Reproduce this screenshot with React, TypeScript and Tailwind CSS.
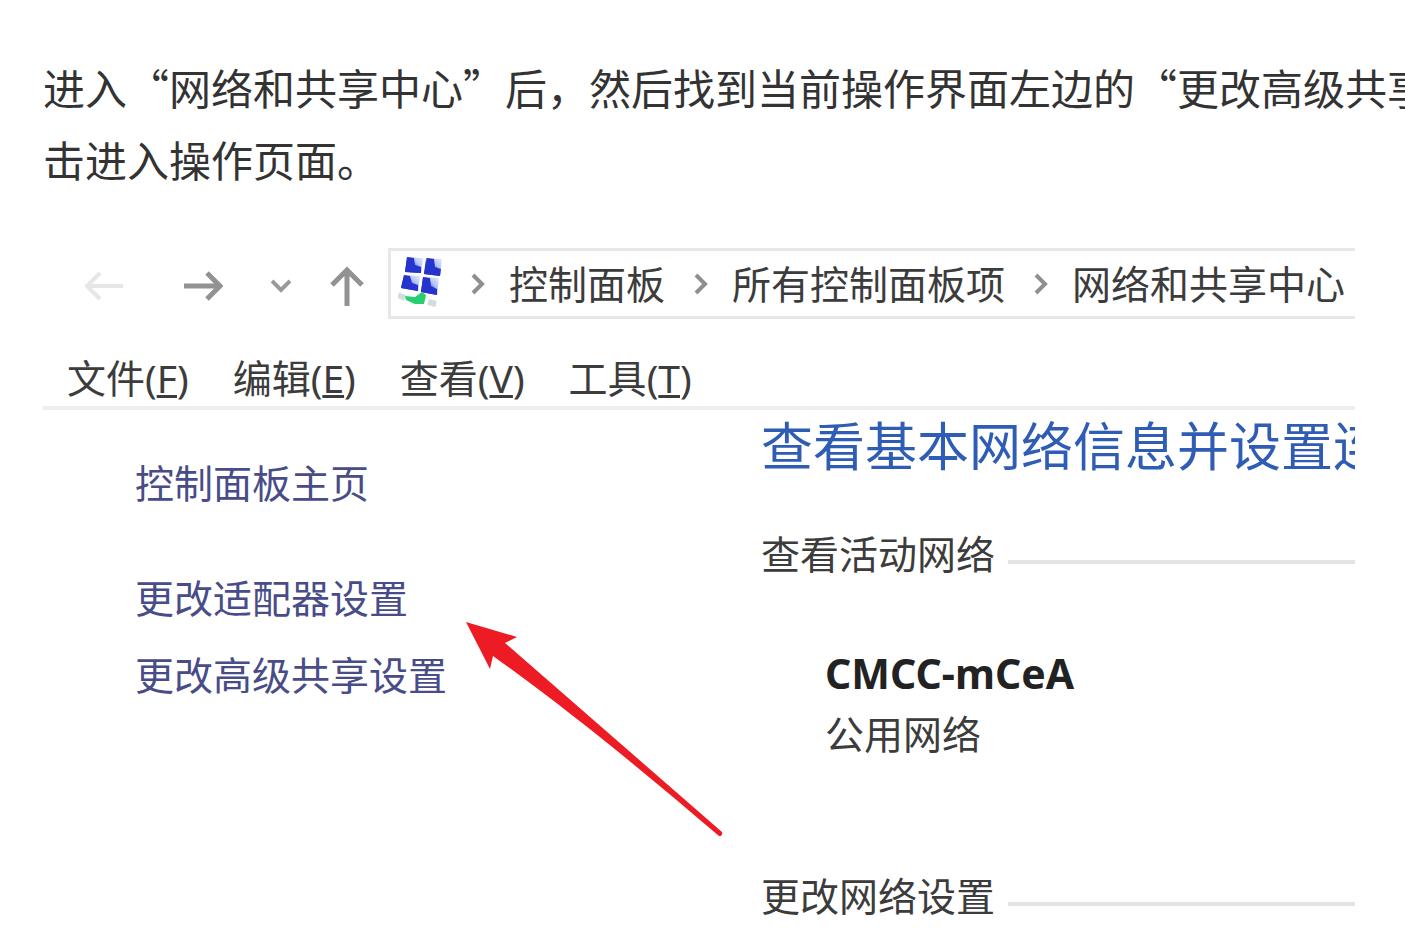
const crumbs = ["控制面板", "所有控制面板项", "网络和共享中心"];

const menus = [
    { label: "文件", accessKey: "F" },
    { label: "编辑", accessKey: "E" },
    { label: "查看", accessKey: "V" },
    { label: "工具", accessKey: "T" },
];

function NetworkIcon() {
    return (
        <svg width="44" height="54" viewBox="0 0 44 54" className="shrink-0" aria-hidden="true">
            <defs>
                <linearGradient id="screen" x1="0" y1="1" x2="1" y2="0">
                    <stop offset="0.35" stopColor="#2232cc" />
                    <stop offset="0.65" stopColor="#b4c4f6" />
                    <stop offset="1" stopColor="#e6eeff" />
                </linearGradient>
            </defs>
            <g transform="translate(0 -2)">
                <path d="M9 2 25 3 23 18 7 17Z" fill="url(#screen)" />
                <path d="M28 3 44 4 42 21 26 19Z" fill="url(#screen)" />
                <path d="M6 20 22 21 20 36 3 33Z" fill="url(#screen)" />
                <path d="M25 22 41 23 39 40 23 37Z" fill="url(#screen)" />
                <path d="M9 2 16 3 17 10 23 12 23 18 7 17Z" fill="#2534cf" />
                <path d="M29 3 36 4 37 12 43 14 42 21 26 19Z" fill="#2534cf" />
                <path d="M6 20 12 21 14 28 20 30 20 36 3 33Z" fill="#2534cf" />
                <path d="M25 22 32 23 33 31 39 34 39 40 23 37Z" fill="#2534cf" />
                <path d="M0 40 7 43 M30 47 38 49" stroke="#d3dddd" strokeWidth="6" />
                <path d="M7 41 17 42 24 37 28 40 26 49 17 49 8 45Z" fill="#28cf70" />
            </g>
        </svg>
    );
}

function Chevron() {
    return (
        <svg width="14" height="22" viewBox="0 0 14 22" className="ml-[29px] mr-6 shrink-0" aria-hidden="true">
            <path d="M2 2 11 11 2 20" fill="none" stroke="#8f8f8f" strokeWidth="4" />
        </svg>
    );
}

function NavButtons() {
    return (
        <div className="flex shrink-0 items-center pl-[41px] pr-6 pt-1">
            <button type="button" aria-label="后退" className="mr-[61px]">
                <svg width="39" height="30" viewBox="0 0 39 30" fill="none" stroke="#e6e6e6" strokeWidth="4">
                    <path d="M39 15H3M16 2 3 15 16 28" />
                </svg>
            </button>
            <button type="button" aria-label="前进" className="mr-12">
                <svg width="39" height="30" viewBox="0 0 39 30" fill="none" stroke="#929292" strokeWidth="5">
                    <path d="M0 15H36M23 2 36 15 23 28" />
                </svg>
            </button>
            <button type="button" aria-label="最近位置" className="mr-[39px]">
                <svg width="20" height="14" viewBox="0 0 20 14" fill="none" stroke="#999999" strokeWidth="4">
                    <path d="M1 2 10 11 19 2" />
                </svg>
            </button>
            <button type="button" aria-label="向上">
                <svg width="34" height="40" viewBox="0 0 34 40" fill="none" stroke="#929292" strokeWidth="5">
                    <path d="M17 40V4M2 19 17 4 32 19" />
                </svg>
            </button>
        </div>
    );
}

function SectionTitle({ title }: { title: string }) {
    return (
        <div className="flex items-end">
            <h3 className="shrink-0">{title}</h3>
            <div className="mb-[10px] ml-[13px] h-1 grow bg-[#e4e4e4]" />
        </div>
    );
}

function ControlPanel() {
    return (
        <section className="relative mt-[53px] overflow-hidden whitespace-nowrap font-['Noto_Sans','Noto_Sans_CJK_SC',sans-serif] text-[39px] leading-10 text-[#3c3c3c]">
            <div className="flex">
                <NavButtons />
                <nav className="flex h-[71px] grow items-center border-y-3 border-l-3 border-[#e8e8e8] pl-[7px]">
                    <NetworkIcon />
                    {crumbs.map((crumb) => (
                        <div key={crumb} className="flex items-center">
                            <Chevron />
                            <a href="#">{crumb}</a>
                        </div>
                    ))}
                </nav>
            </div>

            <div className="flex gap-11 border-b-4 border-[#eeeeee] pb-2 pl-6 pt-[39px]">
                {menus.map((menu) => (
                    <button key={menu.label} type="button">
                        {menu.label}({<span className="underline decoration-3 underline-offset-2">{menu.accessKey}</span>})
                    </button>
                ))}
            </div>

            <div className="flex">
                <aside className="flex w-[718px] shrink-0 flex-col items-start pl-[92px] pt-[53px] text-[#484c88]">
                    <a href="#">控制面板主页</a>
                    <a href="#" className="mt-[75px]">更改适配器设置</a>
                    <a href="#" className="mt-[37px]">更改高级共享设置</a>
                </aside>
                <main className="min-w-0 grow pb-5 pt-1.5">
                    <h2 className="mb-[58px] overflow-hidden text-[52px] leading-[60px] text-[#2f5db5]">
                        查看基本网络信息并设置连接
                    </h2>
                    <SectionTitle title="查看活动网络" />
                    <div className="mb-[122px] mt-[79px] pl-16">
                        <p className="mb-[21px] text-[41px] font-bold text-[#222222]">CMCC-mCeA</p>
                        <p>公用网络</p>
                    </div>
                    <SectionTitle title="更改网络设置" />
                </main>
            </div>

            <svg
                width="262"
                height="222"
                viewBox="463 618 262 222"
                className="absolute left-[420px] top-[370px]"
                aria-hidden="true"
            >
                <path
                    d="M466 622 517 637 505 643 L722 832 Q723 836 719 836 C645 773 574 714 493 656 L490 669Z"
                    fill="#ed1c24"
                />
            </svg>
        </section>
    );
}

export default function App() {
    return (
        <div className="min-h-screen overflow-hidden bg-white pl-[43px] pr-[50px] pt-[51px]" lang="zh-CN">
            <p className="whitespace-nowrap font-['Noto_Sans_CJK_SC',sans-serif] text-[42px] leading-[72px] text-[#333333]">
                进入“网络和共享中心”后，然后找到当前操作界面左边的“更改高级共享设置”，点
                <br />
                击进入操作页面。
            </p>
            <ControlPanel />
        </div>
    );
}
